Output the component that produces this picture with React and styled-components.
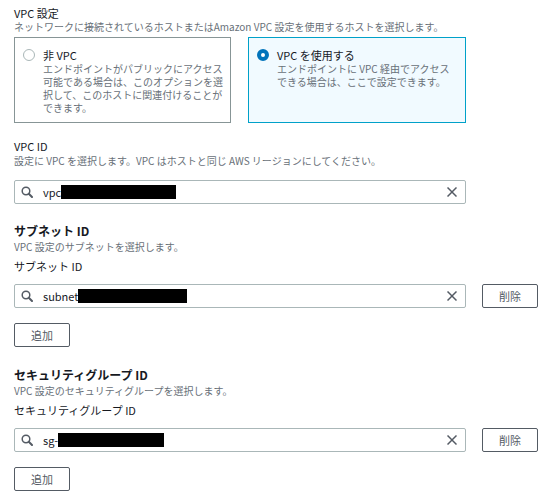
import styled, { createGlobalStyle } from 'styled-components';

const GlobalStyle = createGlobalStyle`
  body {
    margin: 0;
    background: #ffffff;
    font-family: "Noto Sans CJK JP", "Noto Sans", sans-serif;
    color: #16191f;
  }
`;

const Page = styled.div`
  width: 558px;
  box-sizing: border-box;
  padding: 6px 14px 0;
`;

const Section = styled.section`
  display: flex;
  flex-direction: column;
  align-items: flex-start;
  margin-top: ${props => props.$top || 0}px;
`;

const Title = styled.div`
  font-size: ${props => (props.$heading ? 12 : 11)}px;
  font-weight: ${props => (props.$heading ? 700 : 400)};
  line-height: 14px;
  color: #16191f;
  white-space: nowrap;
  margin-top: ${props => props.$top || 0}px;
`;

const Desc = styled.div`
  font-size: 10px;
  line-height: 14px;
  color: #687078;
  white-space: nowrap;
  margin-top: ${props => props.$top || 0}px;
`;

const CardGrid = styled.div`
  display: grid;
  grid-template-columns: 217px 218px;
  column-gap: 17px;
  margin-top: 3px;
`;

const Card = styled.label`
  box-sizing: border-box;
  height: 86px;
  display: flex;
  gap: 8px;
  padding: 10px 8px;
  border: 1px solid ${props => (props.$selected ? '#00a1c9' : '#879596')};
  background: ${props => (props.$selected ? '#f1faff' : '#ffffff')};
`;

const Radio = styled.span`
  box-sizing: border-box;
  flex: none;
  width: 12px;
  height: 12px;
  margin-top: 1px;
  border-radius: 50%;
  background: #ffffff;
  border: ${props => (props.$checked ? '4px solid #0073bb' : '1px solid #aab7b8')};
`;

const CardText = styled.div`
  display: flex;
  flex-direction: column;
`;

const CardLabel = styled.div`
  font-size: 11px;
  line-height: 14px;
  color: #16191f;
`;

const CardDesc = styled.div`
  font-size: 10px;
  line-height: 13px;
  color: #687078;
  white-space: nowrap;
`;

const FieldRow = styled.div`
  display: flex;
  align-items: center;
  gap: 16px;
  margin-top: ${props => props.$top || 0}px;
`;

const InputBox = styled.div`
  box-sizing: border-box;
  width: 452px;
  height: 24px;
  display: flex;
  align-items: center;
  gap: 10px;
  padding: 0 8px 0 6px;
  border: 1px solid #aab7b8;
  border-radius: 2px;
  background: #ffffff;
`;

const Value = styled.div`
  flex: 1;
  display: flex;
  align-items: center;
  font-size: 11px;
  line-height: 14px;
  color: #16191f;
`;

const Redact = styled.span`
  display: inline-block;
  height: 14px;
  background: #000000;
`;

const Button = styled.button`
  box-sizing: border-box;
  width: 56px;
  height: 24px;
  padding: 0;
  border: 1px solid #545b64;
  border-radius: 2px;
  background: #ffffff;
  color: #545b64;
  font-family: inherit;
  font-size: 11px;
  line-height: 14px;
  margin-top: ${props => props.$top || 0}px;
`;

const SearchIcon = () => (
  <svg width="12" height="12" viewBox="0 0 12 12" fill="none" stroke="#545b64">
    <circle cx="5" cy="5" r="3.8" strokeWidth="1.5" />
    <line x1="7.8" y1="7.8" x2="11" y2="11" strokeWidth="2" strokeLinecap="round" />
  </svg>
);

const ClearIcon = () => (
  <svg width="10" height="10" viewBox="0 0 10 10" stroke="#545b64" strokeWidth="1.5">
    <line x1="0.5" y1="0.5" x2="9.5" y2="9.5" />
    <line x1="9.5" y1="0.5" x2="0.5" y2="9.5" />
  </svg>
);

const SearchField = ({ prefix, hidden }) => (
  <InputBox>
    <SearchIcon />
    <Value>
      {prefix}
      <Redact style={{ width: hidden }} />
    </Value>
    <ClearIcon />
  </InputBox>
);

const ListSection = ({ top, heading, desc, label, prefix, hidden }) => (
  <Section $top={top}>
    <Title $heading>{heading}</Title>
    <Desc $top={2}>{desc}</Desc>
    <Title $top={5}>{label}</Title>
    <FieldRow $top={11}>
      <SearchField prefix={prefix} hidden={hidden} />
      <Button>削除</Button>
    </FieldRow>
    <Button $top={15}>追加</Button>
  </Section>
);

const App = () => (
  <Page>
    <GlobalStyle />
    <Section>
      <Title>VPC 設定</Title>
      <Desc>ネットワークに接続されているホストまたはAmazon VPC 設定を使用するホストを選択します。</Desc>
      <CardGrid>
        <Card>
          <Radio />
          <CardText>
            <CardLabel>非 VPC</CardLabel>
            <CardDesc>
              エンドポイントがパブリックにアクセス<br />
              可能である場合は、このオプションを選<br />
              択して、このホストに関連付けることが<br />
              できます。
            </CardDesc>
          </CardText>
        </Card>
        <Card $selected>
          <Radio $checked />
          <CardText>
            <CardLabel>VPC を使用する</CardLabel>
            <CardDesc>
              エンドポイントに VPC 経由でアクセス<br />
              できる場合は、ここで設定できます。
            </CardDesc>
          </CardText>
        </Card>
      </CardGrid>
    </Section>

    <Section $top={16}>
      <Title>VPC ID</Title>
      <Desc $top={1}>設定に VPC を選択します。VPC はホストと同じ AWS リージョンにしてください。</Desc>
      <FieldRow $top={12}>
        <SearchField prefix="vpc" hidden={115} />
      </FieldRow>
    </Section>

    <ListSection
      top={20}
      heading="サブネット ID"
      desc="VPC 設定のサブネットを選択します。"
      label="サブネット ID"
      prefix="subnet"
      hidden={109}
    />

    <ListSection
      top={21}
      heading="セキュリティグループ ID"
      desc="VPC 設定のセキュリティグループを選択します。"
      label="セキュリティグループ ID"
      prefix="sg-"
      hidden={106}
    />
  </Page>
);

export default App;
